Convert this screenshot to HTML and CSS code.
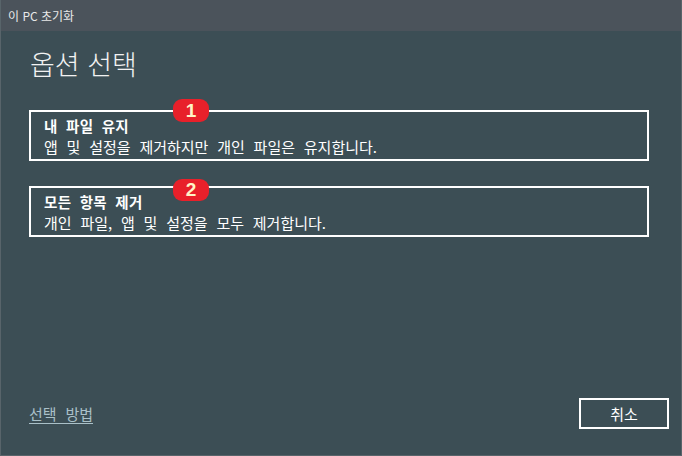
FILE: index.html
```html
<!DOCTYPE html>
<html lang="ko">
<head>
    <meta charset="UTF-8">
    <title>이 PC 초기화</title>
    <link rel="stylesheet" href="styles.css">
</head>
<body>
    <div class="window">
        <div class="titlebar">이 PC 초기화</div>

        <div class="content">
            <h1>옵션 선택</h1>

            <div class="option">
                <span class="badge">1</span>
                <div class="option-title">내 파일 유지</div>
                <div class="option-desc">앱 및 설정을 제거하지만 개인 파일은 유지합니다.</div>
            </div>

            <div class="option">
                <span class="badge badge-low">2</span>
                <div class="option-title">모든 항목 제거</div>
                <div class="option-desc">개인 파일, 앱 및 설정을 모두 제거합니다.</div>
            </div>

            <div class="footer">
                <a href="#" class="help-link">선택 방법</a>
                <button class="btn-cancel">취소</button>
            </div>
        </div>
    </div>
</body>
</html>
```

FILE: styles.css
```css
* {
    margin: 0;
    padding: 0;
    box-sizing: border-box;
    font-family: "Noto Sans CJK KR", "Noto Sans", sans-serif;
}

html, body {
    width: 682px;
    height: 456px;
    overflow: hidden;
}

.window {
    width: 682px;
    height: 456px;
    background-color: #3c4e55;
    border: 1px solid #58646a;
    border-top: none;
    display: flex;
    flex-direction: column;
}

.titlebar {
    height: 31px;
    background-color: #4b535b;
    color: #e8e8e8;
    font-size: 12px;
    line-height: 31px;
    padding-left: 7px;
}

.content {
    flex: 1;
    display: flex;
    flex-direction: column;
    padding: 16px 12px 0 28px;
}

h1 {
    font-size: 27px;
    font-weight: 300;
    color: #f2f2f2;
    line-height: 34px;
    margin-left: 1px;
    margin-bottom: 29px;
}

.option {
    position: relative;
    width: 620px;
    height: 51px;
    border: 2px solid #ffffff;
    padding: 3px 0 0 13px;
    color: #ffffff;
    margin-bottom: 25px;
    overflow: visible;
}

.option-title {
    font-size: 14.5px;
    font-weight: 700;
    letter-spacing: 0.3px;
    word-spacing: 4px;
    line-height: 21px;
}

/* body text: 15px with wider word gaps */
.option-desc,
.help-link,
.btn-cancel {
    font-size: 15px;
    word-spacing: 4.6px;
}

.option-desc {
    line-height: 22px;
}

.badge {
    position: absolute;
    top: -13px;
    left: 142px;
    width: 36px;
    height: 23px;
    border-radius: 9px;
    background-color: #e8202a;
    color: #fff3c6;
    font-family: "Liberation Sans", Arial, sans-serif;
    font-weight: 700;
    font-size: 19px;
    line-height: 23px;
    text-align: center;
}

.badge-low {
    top: -9px;
    height: 22px;
    line-height: 22px;
}

.footer {
    margin-top: auto;
    display: flex;
    justify-content: space-between;
    align-items: center;
    margin-bottom: 26px;
}

.help-link {
    color: #aac0c8;
    line-height: 22px;
    text-decoration: underline;
    text-underline-offset: 3px;
}

.btn-cancel {
    width: 90px;
    height: 31px;
    border: 2px solid #ffffff;
    background: transparent;
    color: #ffffff;
    cursor: pointer;
}
```
